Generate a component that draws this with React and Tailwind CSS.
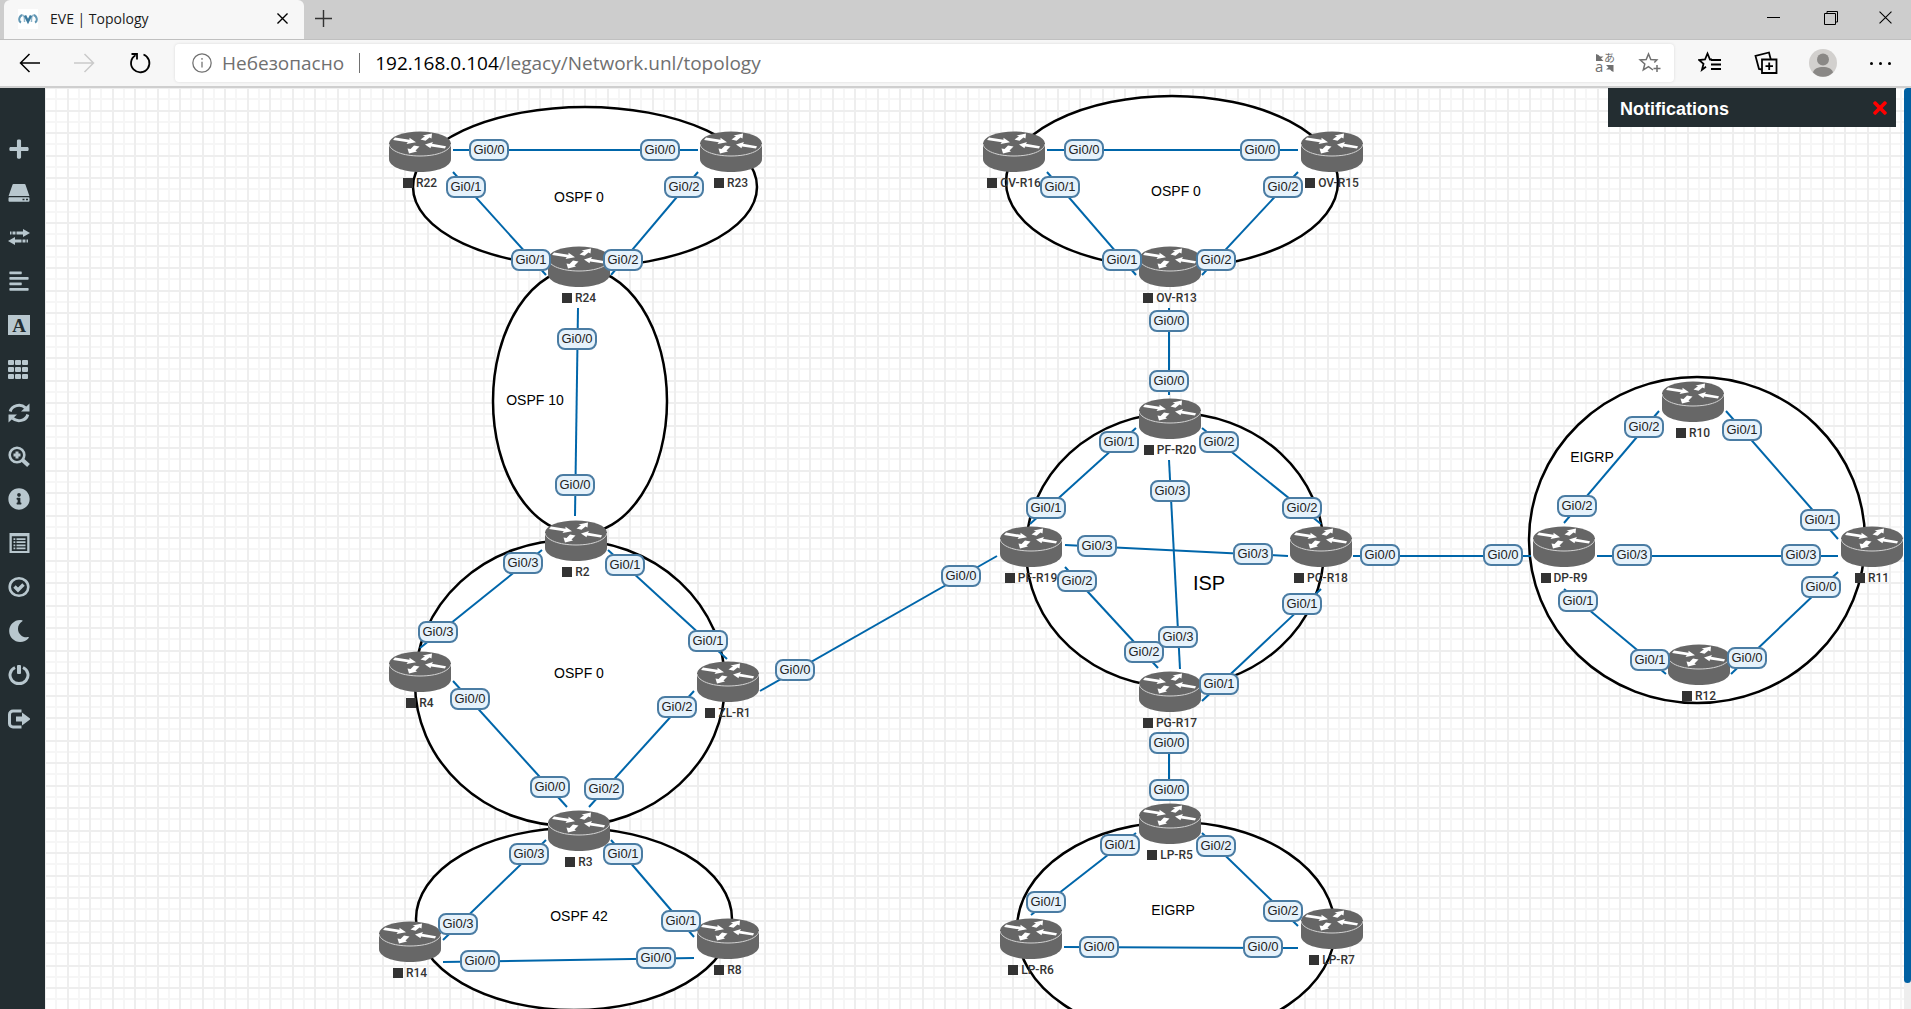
import React from "react";
import {
  FaPlus,
  FaAlignLeft,
  FaInfoCircle,
  FaMoon,
  FaTimes,
} from "react-icons/fa";

/* ---------- topology data (screen units, shifted by ORIGIN) ---------- */

const ORIGIN = { x: 45, y: 88 };

const areas = [
  { cx: 585, cy: 187, rx: 172, ry: 80 },
  { cx: 580, cy: 401, rx: 87, ry: 133 },
  { cx: 570, cy: 683, rx: 155, ry: 143 },
  { cx: 574, cy: 919, rx: 158, ry: 91 },
  { cx: 1172, cy: 182, rx: 166, ry: 86 },
  { cx: 1175, cy: 550, rx: 149, ry: 137 },
  { cx: 1176, cy: 929, rx: 159, ry: 107 },
  { cx: 1697, cy: 540, rx: 168, ry: 163 },
];

const links = [
  [453, 150, 698, 150],
  [453, 172, 546, 275],
  [698, 172, 611, 275],
  [578, 308, 575, 516],
  [542, 550, 420, 648],
  [608, 550, 727, 659],
  [453, 681, 567, 807],
  [694, 691, 589, 807],
  [760, 691, 997, 556],
  [546, 840, 443, 940],
  [611, 840, 694, 937],
  [443, 962, 694, 958],
  [1047, 150, 1298, 150],
  [1047, 172, 1136, 275],
  [1298, 172, 1202, 275],
  [1169, 308, 1169, 395],
  [1136, 428, 1030, 524],
  [1202, 428, 1321, 524],
  [1169, 460, 1180, 669],
  [1065, 545, 1288, 556],
  [1065, 567, 1158, 668],
  [1321, 589, 1202, 701],
  [1353, 556, 1531, 556],
  [1169, 732, 1169, 800],
  [1136, 833, 1031, 915],
  [1202, 833, 1298, 926],
  [1064, 947, 1298, 948],
  [1659, 411, 1564, 523],
  [1726, 411, 1838, 539],
  [1597, 556, 1838, 556],
  [1564, 589, 1666, 674],
  [1838, 572, 1731, 674],
];

const nodes = [
  { name: "R22", x: 420, y: 131 },
  { name: "R23", x: 731, y: 131 },
  { name: "R24", x: 579, y: 246 },
  { name: "R2", x: 576, y: 520 },
  { name: "R4", x: 420, y: 651 },
  { name: "ZL-R1", x: 728, y: 661 },
  { name: "R3", x: 579, y: 810 },
  { name: "R14", x: 410, y: 921 },
  { name: "R8", x: 728, y: 918 },
  { name: "OV-R16", x: 1014, y: 131 },
  { name: "OV-R15", x: 1332, y: 131 },
  { name: "OV-R13", x: 1170, y: 246 },
  { name: "PF-R20", x: 1170, y: 398 },
  { name: "PF-R19", x: 1031, y: 526 },
  { name: "PC-R18", x: 1321, y: 526 },
  { name: "PG-R17", x: 1170, y: 671 },
  { name: "LP-R5", x: 1170, y: 803 },
  { name: "LP-R6", x: 1031, y: 918 },
  { name: "LP-R7", x: 1332, y: 908 },
  { name: "R10", x: 1693, y: 381 },
  { name: "DP-R9", x: 1564, y: 526 },
  { name: "R11", x: 1872, y: 526 },
  { name: "R12", x: 1699, y: 644 },
];

const ports = [
  ["Gi0/0", 489, 150],
  ["Gi0/0", 660, 150],
  ["Gi0/1", 466, 187],
  ["Gi0/2", 684, 187],
  ["Gi0/1", 531, 260],
  ["Gi0/2", 623, 260],
  ["Gi0/0", 577, 339],
  ["Gi0/0", 575, 485],
  ["Gi0/3", 523, 563],
  ["Gi0/1", 625, 565],
  ["Gi0/3", 438, 632],
  ["Gi0/1", 708, 641],
  ["Gi0/0", 470, 699],
  ["Gi0/2", 677, 707],
  ["Gi0/0", 795, 670],
  ["Gi0/0", 550, 787],
  ["Gi0/2", 604, 789],
  ["Gi0/3", 529, 854],
  ["Gi0/1", 623, 854],
  ["Gi0/3", 458, 924],
  ["Gi0/1", 681, 921],
  ["Gi0/0", 480, 961],
  ["Gi0/0", 656, 958],
  ["Gi0/0", 1084, 150],
  ["Gi0/0", 1260, 150],
  ["Gi0/1", 1060, 187],
  ["Gi0/2", 1283, 187],
  ["Gi0/1", 1122, 260],
  ["Gi0/2", 1216, 260],
  ["Gi0/0", 1169, 321],
  ["Gi0/0", 1169, 381],
  ["Gi0/1", 1119, 442],
  ["Gi0/2", 1219, 442],
  ["Gi0/3", 1170, 491],
  ["Gi0/1", 1046, 508],
  ["Gi0/2", 1302, 508],
  ["Gi0/3", 1097, 546],
  ["Gi0/3", 1253, 554],
  ["Gi0/0", 1380, 555],
  ["Gi0/0", 1503, 555],
  ["Gi0/0", 961, 576],
  ["Gi0/2", 1077, 581],
  ["Gi0/1", 1302, 604],
  ["Gi0/2", 1144, 652],
  ["Gi0/3", 1178, 637],
  ["Gi0/1", 1219, 684],
  ["Gi0/0", 1169, 743],
  ["Gi0/0", 1169, 790],
  ["Gi0/1", 1120, 845],
  ["Gi0/2", 1216, 846],
  ["Gi0/1", 1046, 902],
  ["Gi0/2", 1283, 911],
  ["Gi0/0", 1099, 947],
  ["Gi0/0", 1263, 947],
  ["Gi0/2", 1644, 427],
  ["Gi0/1", 1742, 430],
  ["Gi0/2", 1577, 506],
  ["Gi0/1", 1820, 520],
  ["Gi0/3", 1632, 555],
  ["Gi0/3", 1801, 555],
  ["Gi0/1", 1578, 601],
  ["Gi0/0", 1821, 587],
  ["Gi0/1", 1650, 660],
  ["Gi0/0", 1747, 658],
];

const captions = [
  { text: "OSPF 0", x: 579, y: 197 },
  { text: "OSPF 10", x: 535, y: 400 },
  { text: "OSPF 0", x: 579, y: 673 },
  { text: "OSPF 42", x: 579, y: 916 },
  { text: "OSPF 0", x: 1176, y: 191 },
  { text: "ISP", x: 1209, y: 583, large: true },
  { text: "EIGRP", x: 1173, y: 910 },
  { text: "EIGRP", x: 1592, y: 457 },
];

const at = (x, y) => ({ left: x - ORIGIN.x, top: y - ORIGIN.y });

/* ---------- sidebar glyphs ---------- */

function Glyph({ children }) {
  return (
    <svg viewBox="0 0 22 22" className="size-[22px]" fill="currentColor" aria-hidden="true">
      {children}
    </svg>
  );
}

const NodeIcon = () => (
  <Glyph>
    <path d="M5.500 2h11a1 1 0 0 1 1 .8L21.400 14H.6L4.500 2.800A1 1 0 0 1 5.500 2z" />
    <path
      fillRule="evenodd"
      d="M1.500 15.200h19a1 1 0 0 1 1 1v2.600a1 1 0 0 1-1 1h-19a1 1 0 0 1-1-1v-2.600a1 1 0 0 1 1-1zM14.500 16.800v1.400h2v-1.400zM18 16.800v1.400h2v-1.400z"
    />
  </Glyph>
);

const TransferIcon = () => (
  <Glyph>
    <path d="M2 5.500h1.500v3H2zM4.500 5.500h3v3h-3zM8.500 5.500H15V3l7 4-7 4V8.500H8.500zM20 13.500h-1.500v3H20zM17.500 13.500h-3v3h3zM13.500 13.500H7V11l-7 4 7 4v-2.500h6.500z" />
  </Glyph>
);

const TextIcon = () => (
  <Glyph>
    <rect y="1" width="22" height="20" />
    <text
      x="11"
      y="17.500"
      textAnchor="middle"
      fill="#232d31"
      className="font-['Liberation_Serif',serif] text-[19px] font-bold"
    >
      A
    </text>
  </Glyph>
);

const GridIcon = () => (
  <Glyph>
    {[2, 9, 16].map((y) =>
      [0, 7, 14].map((x) => <rect key={`${x}-${y}`} x={x} y={y} width="6" height="5" rx="1" />)
    )}
  </Glyph>
);

const RefreshIcon = () => (
  <Glyph>
    <g fill="none" stroke="currentColor" strokeWidth="3">
      <path d="M2.200 9.500A9 8 0 0 1 17.500 5.800" />
      <path d="M19.800 12.500A9 8 0 0 1 4.500 16.200" />
    </g>
    <path d="M21.500 1.500v8h-8.500zM.5 20.500v-8H9z" />
  </Glyph>
);

const ZoomIcon = () => (
  <Glyph>
    <g fill="none" stroke="currentColor">
      <circle cx="9" cy="9" r="7.300" strokeWidth="2.600" />
      <path d="M14.500 14l6 5.500" strokeWidth="4" />
      <path d="M9 5.500v7M5.500 9h7" strokeWidth="3" />
    </g>
  </Glyph>
);

const ListIcon = () => (
  <Glyph>
    <path fillRule="evenodd" d="M1.500 1h20v20h-20zM3.800 4.200V19h15.400V4.200z" />
    <path d="M5.500 6.200h1.800V8H5.500zM8.500 6.200h9V8h-9zM5.500 9.300h1.800v1.800H5.500zM8.500 9.300h9v1.800h-9zM5.500 12.400h1.800v1.800H5.500zM8.500 12.400h9v1.800h-9zM5.500 15.500h1.800v1.800H5.500zM8.500 15.500h9v1.800h-9z" />
  </Glyph>
);

const CheckIcon = () => (
  <Glyph>
    <g fill="none" stroke="currentColor">
      <ellipse cx="11" cy="11" rx="9.300" ry="8.800" strokeWidth="2.600" />
      <path d="M6.500 10.500l3.500 3.500 5.500-5.500" strokeWidth="3.400" />
    </g>
  </Glyph>
);

const PowerIcon = () => (
  <Glyph>
    <path d="M7 3.500a9 8.500 0 1 0 8 0" fill="none" stroke="currentColor" strokeWidth="3" />
    <rect x="9" y="1" width="4" height="9" rx="1" />
  </Glyph>
);

const LogoutIcon = () => (
  <Glyph>
    <path
      d="M13.500 3H5a3.500 3.500 0 0 0-3.500 3.500v9A3.500 3.500 0 0 0 5 19h8.500"
      fill="none"
      stroke="currentColor"
      strokeWidth="3"
    />
    <path d="M8 8.500h6v-4l8.500 6.500-8.500 6.500v-4H8z" />
  </Glyph>
);

const sidebarGroups = [
  [
    ["Add an object", <FaPlus className="size-[22px]" />],
    ["Nodes", <NodeIcon />],
    ["Networks", <TransferIcon />],
    ["Startup-configs", <FaAlignLeft className="size-[22px]" />],
    ["Configured objects", <TextIcon />],
    ["More actions", <GridIcon />],
    ["Refresh topology", <RefreshIcon />],
    ["Zoom", <ZoomIcon />],
  ],
  [
    ["Status", <FaInfoCircle className="size-[22px]" />],
    ["Lab details", <ListIcon />],
    ["Lock lab", <CheckIcon />],
    ["Dark mode", <FaMoon className="size-[22px]" />],
    ["Close lab", <PowerIcon />],
    ["Logout", <LogoutIcon />],
  ],
];

/* ---------- topology pieces ---------- */

function RouterIcon() {
  return (
    <svg viewBox="0 0 62 42" className="h-[42px] w-[62px]" aria-hidden="true">
      <path d="M0 12v16C0 35.500 13.500 41 31 41s31-5.500 31-13V12z" fill="#676767" />
      <ellipse cx="31" cy="12.500" rx="31" ry="12" fill="#666" />
      <path d="M0 13C1 20 14 25 31 25s30-5 31-12" fill="none" stroke="#d4d4d4" strokeWidth="1" />
      <g fill="#fff">
        <path d="M6 6.500L20.500 8.800 20.500 6.800 27 11.200 17.500 13 18.800 11.300 4 9z" />
        <path d="M57 15.200L43 12.800 44 11 36 13.500 41.500 17.200 42 15.500 56 17.500z" />
        <path d="M31.500 8.500L36 5.200 33.500 4.500 43 2.500 42.500 7.500 40.500 6.500 36.500 9.800z" />
        <path d="M25 14.500L21.500 18 18.500 17.500 20 22.500 28 20.500 26.500 19.500 30.500 15.500z" />
      </g>
    </svg>
  );
}

function RouterNode({ name, x, y }) {
  return (
    <div
      style={at(x, y)}
      className="absolute flex w-24 -translate-x-1/2 flex-col items-center gap-0.5"
    >
      <RouterIcon />
      <div className="flex h-4 items-center gap-[3px] text-xs leading-4 font-medium text-[#333] font-['Roboto',sans-serif]">
        <span className="size-[10px] bg-[#333]" />
        <span className="whitespace-nowrap">{name}</span>
      </div>
    </div>
  );
}

function Topology() {
  return (
    <main className="relative min-w-0 flex-1 overflow-hidden bg-white">
      <svg className="absolute inset-0 h-full w-full" aria-hidden="true">
        <defs>
          <pattern id="grid" width="45" height="45" patternUnits="userSpaceOnUse">
            <path d="M11 0v45M34 0v45M0 11h45M0 34h45" stroke="#f6f6f6" strokeWidth="2" />
            <path d="M0 0v45M23 0v45M45 0v45M0 0h45M0 23h45M0 45h45" stroke="#eee" strokeWidth="2" />
          </pattern>
        </defs>
        <rect width="100%" height="100%" fill="url(#grid)" />
        <g transform={`translate(${-ORIGIN.x} ${-ORIGIN.y})`}>
          {areas.map((a, i) => (
            <ellipse key={i} {...a} fill="#fff" stroke="#000" strokeWidth="2.500" />
          ))}
          {links.map(([x1, y1, x2, y2], i) => (
            <line key={i} x1={x1} y1={y1} x2={x2} y2={y2} stroke="#0066aa" strokeWidth="2" />
          ))}
        </g>
      </svg>

      {captions.map((c, i) => (
        <span
          key={i}
          style={at(c.x, c.y)}
          className={`absolute -translate-x-1/2 -translate-y-1/2 whitespace-nowrap text-black font-['Liberation_Sans',sans-serif] ${
            c.large ? "text-xl leading-6" : "text-sm leading-4"
          }`}
        >
          {c.text}
        </span>
      ))}

      {nodes.map((n) => (
        <RouterNode key={n.name} {...n} />
      ))}

      {ports.map(([text, x, y], i) => (
        <span
          key={i}
          style={at(x, y)}
          className="absolute flex h-[22px] w-10 -translate-x-1/2 -translate-y-1/2 items-center justify-center rounded-lg border-2 border-[#4a7ca3] bg-[#e6f2fb] text-[13px] leading-4 text-[#222] font-['Liberation_Sans',sans-serif]"
        >
          {text}
        </span>
      ))}

      <section className="absolute top-0 right-[15px] flex h-[39px] w-72 items-center justify-between bg-[#232d31] pr-1.5 pl-3">
        <h2 className="pt-0.5 text-lg leading-6 font-bold text-white font-['Liberation_Sans',sans-serif]">
          Notifications
        </h2>
        <button type="button" aria-label="Close notifications" className="text-[#f00]">
          <FaTimes className="size-5" />
        </button>
      </section>

      <div className="absolute inset-y-0 right-0 w-[7px] bg-[#eee] pb-[26px]">
        <div className="h-full rounded-l-sm rounded-b-sm bg-[#0060a2]" />
      </div>
    </main>
  );
}

/* ---------- browser chrome ---------- */

function Line({ className, children, width = 1.5 }) {
  return (
    <svg
      viewBox="0 0 24 24"
      className={className}
      fill="none"
      stroke="currentColor"
      strokeWidth={width}
      aria-hidden="true"
    >
      {children}
    </svg>
  );
}

function TabStrip() {
  return (
    <header className="flex h-[39px] items-center bg-[#cdcdcd] pl-1">
      <div className="flex h-full w-[300px] items-center rounded-t-md bg-[#f7f7f7] pr-3 pb-0.5 pl-3.5">
        <svg viewBox="0 0 20 20" className="size-5" aria-hidden="true">
          <rect width="20" height="20" fill="#fff" />
          <g fill="none" stroke="#6297b4" strokeWidth="2">
            <path d="M4.500 6C1 7 0 12 3 13.500M15.500 6c3.500 1 4.500 6 1.500 7.500" />
            <path d="M4.500 6c2.500.5 2 5 2 7M15.500 6c-2.500.5-2 5-2 7" stroke="#93b8cc" strokeWidth="1.500" />
            <path d="M7 6.500L10 12.500l3-6" stroke="#3d7b9f" strokeWidth="2.500" />
          </g>
        </svg>
        <span className="ml-3 text-sm leading-5 text-[#1b1b1b]">EVE | Topology</span>
        <button type="button" aria-label="Close tab" className="ml-auto p-1 text-black">
          <Line className="size-[11px]" width={3}>
            <path d="M1 1l22 22M23 1L1 23" />
          </Line>
        </button>
      </div>
      <button type="button" aria-label="New tab" className="ml-[7px] p-1 pb-1.5 text-[#333]">
        <Line className="size-[17px]" width={2}>
          <path d="M12 0v24M0 12h24" />
        </Line>
      </button>
      <div className="ml-auto flex h-full pb-1 text-black">
        <button type="button" aria-label="Minimize" className="flex h-full w-[57px] items-center justify-center">
          <span className="h-px w-[13px] bg-black" />
        </button>
        <button type="button" aria-label="Restore" className="flex h-full w-[57px] items-center justify-center">
          <svg viewBox="0 0 14 14" className="size-3.5" fill="none" stroke="currentColor" aria-hidden="true">
            <path d="M.5 2.500h11v11h-11zM3 2.500v-2h10.500V11h-2" />
          </svg>
        </button>
        <button type="button" aria-label="Close window" className="flex h-full w-[52px] items-center justify-center">
          <Line className="size-[13px]" width={2}>
            <path d="M1 1l22 22M23 1L1 23" />
          </Line>
        </button>
      </div>
    </header>
  );
}

function Toolbar() {
  return (
    <div className="flex h-[49px] items-center border-t border-b-2 border-t-[#c0c0c0] border-b-[#cfcfcf] bg-[#f7f7f7]">
      <button type="button" aria-label="Back" className="flex w-[60px] justify-center text-black">
        <Line className="size-6">
          <path d="M22 12H2.500M11.500 3L2.500 12l9 9" />
        </Line>
      </button>
      <button type="button" aria-label="Forward" className="flex w-12 justify-center text-[#cacaca]">
        <Line className="size-6">
          <path d="M2 12h19.500M12.500 3l9 9-9 9" />
        </Line>
      </button>
      <button type="button" aria-label="Reload" className="flex w-16 justify-center text-black">
        <Line className="size-6" width={1.8}>
          <path d="M7.500 4.200A9.200 9.200 0 1 0 15.500 3.500" />
          <path d="M3.500 3H9v5.500" />
        </Line>
      </button>
      <div className="ml-[3px] flex h-[38px] min-w-0 flex-1 items-center rounded-sm bg-white pr-3 pl-[17px] text-[19px] leading-6 text-[#707070] shadow-[0_0_3px_rgba(0,0,0,0.12)]">
        <Line className="size-5 shrink-0">
          <circle cx="12" cy="12" r="11" />
          <path d="M12 10.500v7M12 6v2" />
        </Line>
        <span className="ml-2.5">Небезопасно</span>
        <span className="mx-[15px] h-5 w-px bg-[#707070]" />
        <a href="#topology" className="truncate">
          <span className="text-black">192.168.0.104</span>/legacy/Network.unl/topology
        </a>
        <button type="button" aria-label="Translate" className="ml-auto text-[#707070]">
          <svg
            viewBox="0 0 26 30"
            className="h-[30px] w-[26px] overflow-visible"
            fill="currentColor"
            aria-hidden="true"
          >
            <text x="3" y="24" className="font-['Open_Sans',sans-serif] text-[15px]">
              a
            </text>
            <text x="12" y="14" className="font-['Noto_Sans_CJK_JP',sans-serif] text-[11px]">
              あ
            </text>
            <path d="M4 6v7h7.500L9 10.500 11.500 8.500H8L6.500 7zM21.500 24v-7h-7.500l2.500 2.500L14 21.500h4l1.500 1.500z" />
          </svg>
        </button>
        <button type="button" aria-label="Add to favorites" className="ml-5 text-[#707070]">
          <Line className="size-6">
            <path d="M15 19l-4.500-3.400-5.200 3.300 1.500-6L2.200 9l6-.4L10.500 3l2.300 5.600 6 .4-2.500 2.500" />
            <path d="M19 14v7M15.500 17.500h7" />
          </Line>
        </button>
      </div>
      <div className="flex items-center text-black">
        <button type="button" aria-label="Favorites" className="flex w-[71px] justify-center">
          <Line className="size-6" width={1.8}>
            <path d="M8 15.800l-4 3 1.500-6L1 9l6-.5L9.500 2.500 12 8.500h2" />
            <path d="M13 9h10M13 13.500h10M13 18h10" />
          </Line>
        </button>
        <button type="button" aria-label="Collections" className="flex w-[41px] justify-center">
          <Line className="size-6" width={1.8}>
            <path d="M8 8.500h14.500v13.500H8zM15.200 11.500v7.500M11.500 15.200H19" />
            <path d="M8 18.500l-3-.5L1.500 5 15 1.500l1.800 7" />
          </Line>
        </button>
        <button type="button" aria-label="Profile" className="flex w-[73px] justify-center">
          <svg viewBox="0 0 28 28" className="size-7" aria-hidden="true">
            <circle cx="14" cy="14" r="14" fill="#d2d0ce" />
            <circle cx="14" cy="10.500" r="6" fill="#8a8886" />
            <path d="M4 23.500C5 19.500 9 18 14 18s9 1.500 10 5.500A14 14 0 0 1 4 23.500z" fill="#8a8886" />
          </svg>
        </button>
        <button type="button" aria-label="Settings and more" className="mr-2.5 flex w-[42px] justify-center gap-1.5">
          <span className="size-[3px] rounded-full bg-black" />
          <span className="size-[3px] rounded-full bg-black" />
          <span className="size-[3px] rounded-full bg-black" />
        </button>
      </div>
    </div>
  );
}

function Sidebar() {
  return (
    <nav aria-label="Lab actions" className="w-[45px] shrink-0 bg-[#232d31] pt-[39px] text-[#b8c7ce]">
      {sidebarGroups.map((group, i) => (
        <ul key={i} className="-mb-0.5">
          {group.map(([label, icon]) => (
            <li key={label}>
              <button type="button" aria-label={label} className="flex h-11 w-full items-center pl-2">
                {icon}
              </button>
            </li>
          ))}
        </ul>
      ))}
    </nav>
  );
}

export default function App() {
  return (
    <div className="flex h-screen flex-col overflow-hidden font-['Open_Sans','Noto_Sans',sans-serif]">
      <TabStrip />
      <Toolbar />
      <div className="flex min-h-0 flex-1">
        <Sidebar />
        <Topology />
      </div>
    </div>
  );
}
